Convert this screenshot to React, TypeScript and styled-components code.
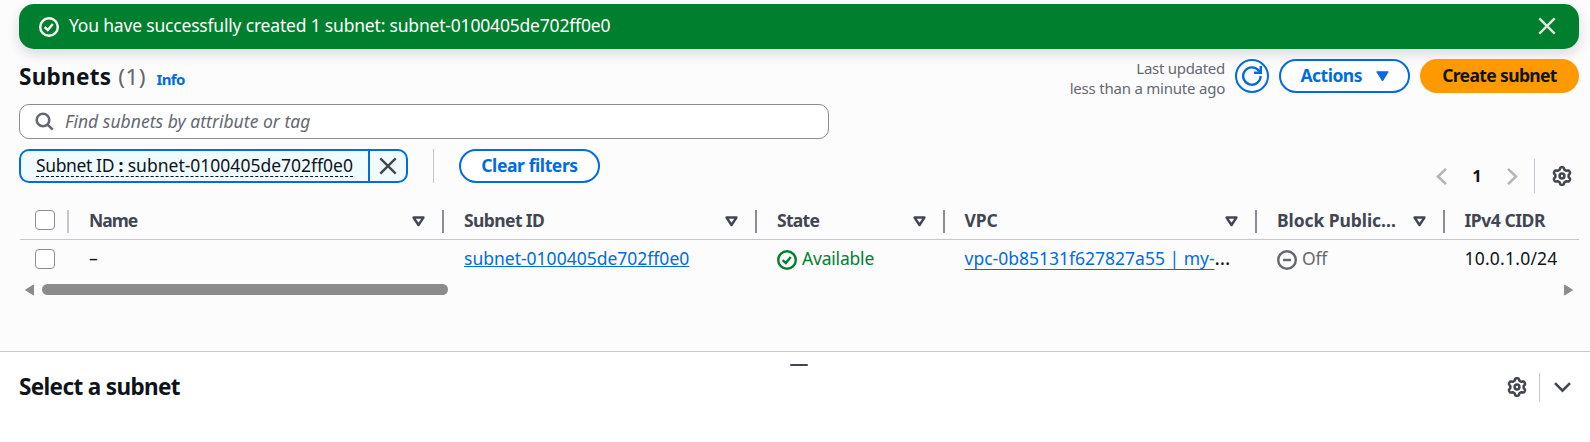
import React from "react";
import styled, { createGlobalStyle } from "styled-components";

const color = {
  text: "#0f141a",
  heading: "#424650",
  muted: "#656871",
  blue: "#006ce0",
  green: "#00802f",
  line: "#c6c6cd",
  control: "#8c8c94",
  disabled: "#b4b4bb",
};

const GlobalStyle = createGlobalStyle`
  * { box-sizing: border-box; }
  body {
    margin: 0;
    background: #fcfcfd;
    color: ${color.text};
    font-family: "Noto Sans", "Open Sans", sans-serif;
    font-size: 17.5px;
    line-height: 24px;
    overflow: hidden;
  }
  svg { display: block; flex: none; }
  button { font: inherit; margin: 0; padding: 0; }
`;

const Page = styled.div`
  display: flex;
  flex-direction: column;
  height: 442px;
`;

const Main = styled.main`
  display: flex;
  flex-direction: column;
  height: 351px;
  padding: 4px 11px 0 19px;
`;

const Text = styled.span<{ $ls?: number }>`
  letter-spacing: ${(p) => p.$ls ?? 0}px;
  white-space: pre;
`;

const Alert = styled.div`
  display: flex;
  align-items: center;
  height: 45px;
  flex: none;
  padding: 0 23px 0 20px;
  border-radius: 15px;
  background: ${color.green};
  color: #fff;
  box-shadow: 0 5px 12px 1px rgba(0, 7, 22, 0.12);
`;

const AlertText = styled.p`
  flex: 1;
  margin: 0;
  padding: 0 0 3px 10px;
`;

const PlainButton = styled.button`
  display: flex;
  border: 0;
  background: none;
`;

const DismissButton = styled(PlainButton)`
  padding-bottom: 2px;
`;

const HeaderRow = styled.header`
  display: flex;
  align-items: flex-start;
  height: 55px;
  padding-top: 10px;
`;

const Title = styled.h1`
  display: flex;
  align-items: baseline;
  flex: 1;
  margin: 0;
  padding-top: 1px;
  font-size: 22.5px;
  font-weight: 700;
  line-height: 34px;
`;

const Count = styled.span`
  margin-left: 7px;
  font-weight: 400;
  letter-spacing: 0.4px;
  color: ${color.muted};
`;

const InfoLink = styled.a`
  margin-left: 10.5px;
  font-size: 15px;
  color: ${color.blue};
  letter-spacing: -0.6px;
`;

const Updated = styled.div`
  display: flex;
  flex-direction: column;
  align-items: flex-end;
  margin: -1px 10px 0 0;
  font-size: 15px;
  line-height: 20px;
  color: ${color.muted};
`;

const Actions = styled.div`
  display: flex;
  gap: 10px;
`;

const Button = styled.button<{ $width: number; $primary?: boolean }>`
  display: flex;
  align-items: center;
  justify-content: center;
  width: ${(p) => p.$width}px;
  height: 34px;
  padding-bottom: 2px;
  border: ${(p) => (p.$primary ? "0" : `2px solid ${color.blue}`)};
  border-radius: 17px;
  background: ${(p) => (p.$primary ? "#ff9900" : "#fff")};
  color: ${(p) => (p.$primary ? color.text : color.blue)};
  font-weight: 700;
  gap: 13.5px;
  svg { margin-top: 2px; }
`;

const IconButton = styled(Button)`
  padding: 0;
  svg { margin: 0; }
`;

const Search = styled.div`
  display: flex;
  align-items: center;
  flex: none;
  width: 810px;
  height: 35px;
  padding: 0 0 1px 15px;
  gap: 11px;
  border: 1px solid ${color.control};
  border-radius: 10px;
  background: #fff;
  color: ${color.muted};
  font-style: italic;
  svg { margin-top: 1px; }
`;

const Filters = styled.div`
  display: flex;
  height: 54px;
  padding-top: 10px;
`;

const Token = styled.div`
  display: flex;
  width: 389px;
  height: 34px;
  border: 2px solid ${color.blue};
  border-radius: 10px;
  background: #f0fbff;
`;

const TokenBody = styled.div`
  flex: 1;
  padding: 2px 0 0 15px;
`;

const TokenLabel = styled.div`
  display: flex;
  width: 317px;
  height: 24px;
  line-height: 24px;
  border-bottom: 1px dashed ${color.text};
`;

const Colon = styled.span`
  width: 15px;
  text-align: center;
  font-weight: 700;
`;

const TokenClose = styled(PlainButton)`
  align-items: center;
  justify-content: center;
  width: 38px;
  padding-right: 1px;
  border-left: 2px solid ${color.blue};
`;

const Divider = styled.i<{ $height: number; $gap: string }>`
  width: 1px;
  height: ${(p) => p.$height}px;
  margin: ${(p) => p.$gap};
  background: ${color.line};
`;

const Pager = styled.nav`
  display: flex;
  align-items: center;
  align-self: flex-end;
  height: 34px;
  margin-left: auto;
  padding-right: 7px;
`;

const PageNumber = styled.span`
  width: 60px;
  padding: 0 0 1px;
  text-align: center;
  font-size: 16.5px;
  font-weight: 700;
`;

const columns = "49px 375px 313px 187.5px 312.5px 187.5px 1fr";

const HeadRow = styled.div`
  display: grid;
  grid-template-columns: ${columns};
  height: 47px;
  margin-left: 1px;
  padding-top: 17px;
  border-bottom: 1px solid ${color.line};
  color: ${color.heading};
  font-weight: 700;
`;

const HeadCell = styled.div<{ $last?: boolean }>`
  display: flex;
  align-items: center;
  justify-content: space-between;
  height: 23px;
  padding: 0 17px 2px 20px;
  border-right: ${(p) => (p.$last ? "0" : `2px solid ${color.control}`)};
  line-height: 23px;
  svg { margin-top: 2px; }
`;

const SelectHead = styled.div`
  height: 23px;
  padding-left: 15px;
  border-right: 2px solid ${color.line};
`;

const Row = styled.div`
  display: grid;
  grid-template-columns: ${columns};
  align-items: start;
  height: 44px;
  margin-left: 1px;
  padding-top: 9px;
`;

const SelectCell = styled.div`
  padding-left: 15px;
`;

const Checkbox = styled.span`
  display: block;
  width: 20px;
  height: 20px;
  border: 1px solid ${color.control};
  border-radius: 4px;
  background: #fff;
`;

const Cell = styled.div`
  padding-left: 20px;
  line-height: 19px;
  white-space: nowrap;
`;

const Link = styled.a<{ $offset: number }>`
  color: ${color.blue};
  text-decoration: underline;
  text-decoration-thickness: 1px;
  text-decoration-skip-ink: none;
  text-underline-offset: ${(p) => p.$offset}px;
`;

const Ellipsis = styled.span`
  font-size: 20px;
  line-height: 1px;
`;

const Status = styled.span<{ $tone: string }>`
  display: flex;
  align-items: flex-start;
  gap: 5px;
  color: ${(p) => p.$tone};
  svg { margin-top: 1px; }
`;

const ScrollTrack = styled.div`
  display: flex;
  align-items: center;
  height: 12px;
  padding: 0 5px 0 5px;
`;

const ScrollThumb = styled.div`
  width: 406px;
  height: 11px;
  margin: 0 auto 1px 7px;
  border-radius: 6px;
  background: #8b8b8b;
`;

const Panel = styled.section`
  flex: 1;
  border-top: 1px solid ${color.line};
  background: #fff;
`;

const Handle = styled.div`
  width: 18px;
  height: 2.5px;
  margin: 11.5px 0 0 790px;
  border-radius: 1px;
  background: ${color.heading};
`;

const PanelBar = styled.div`
  display: flex;
  align-items: center;
  height: 30px;
  margin-top: 6px;
  padding: 0 19.5px 0 19px;
`;

const PanelTitle = styled.h2`
  flex: 1;
  margin: 0;
  padding-bottom: 1px;
  font-size: 22.5px;
  font-weight: 700;
  line-height: 30px;
`;

const CheckCircle = () => (
  <svg width="20" height="20" viewBox="0 0 20 20" fill="none" stroke="currentColor" strokeWidth="2.4">
    <circle cx="10" cy="10" r="8.8" />
    <path d="M5.6 10.2 8.8 13l5-6" />
  </svg>
);

const MinusCircle = () => (
  <svg width="20" height="20" viewBox="0 0 20 20" fill="none" stroke="currentColor" strokeWidth="2.4">
    <circle cx="10" cy="10" r="8.8" />
    <path d="M6 10h8" />
  </svg>
);

const Cross = ({ stroke }: { stroke: string }) => (
  <svg width="18" height="18" viewBox="0 0 18 18" fill="none" stroke={stroke} strokeWidth="2.4">
    <path d="m1.3 1.3 15.4 15.4M16.7 1.3 1.3 16.7" />
  </svg>
);

const SearchIcon = () => (
  <svg width="19" height="19" viewBox="0 0 19 19" fill="none" stroke={color.muted} strokeWidth="2.6">
    <circle cx="8" cy="8" r="6.3" />
    <path d="m12.3 12.3 5.4 5.4" />
  </svg>
);

const Refresh = () => (
  <svg width="20" height="20" viewBox="0 0 20 20" fill="none" stroke="currentColor" strokeWidth="2.4">
    <path d="M18.6 10A8.7 8.7 0 1 1 16.7 4.6L18 6.2" />
    <path d="M18.8 0v6.7H12" />
  </svg>
);

const CaretDown = () => (
  <svg width="13" height="11" viewBox="0 0 13 11" fill="currentColor" stroke="currentColor" strokeLinejoin="round">
    <path d="M.8.8h11.4L6.5 10Z" />
  </svg>
);

const SortIcon = () => (
  <svg width="13" height="11" viewBox="0 0 13 11" fill="none" stroke="currentColor" strokeWidth="2.5" strokeLinejoin="round">
    <path d="M1.6 1.6h9.8L6.5 9Z" />
  </svg>
);

const Chevron = ({ d, w, h, stroke }: { d: string; w: number; h: number; stroke: string }) => (
  <svg width={w} height={h} viewBox={`0 0 ${w} ${h}`} fill="none" stroke={stroke} strokeWidth="2.6">
    <path d={d} />
  </svg>
);

// Six-lobed gear outline sampled from a rounded square wave around the circle.
const gearOutline =
  Array.from({ length: 120 }, (_, i) => {
    const a = (i / 120) * Math.PI * 2;
    // Lobes point straight up and down, so the wave peaks at ±90°.
    const r = 7.7 - 1.1 * Math.tanh(2 * Math.cos(6 * a));
    return `${i ? "L" : "M"}${(10 + r * Math.cos(a)).toFixed(2)} ${(10 + r * Math.sin(a)).toFixed(2)}`;
  }).join("") + "Z";

const Gear = () => (
  <svg width="20" height="20" viewBox="0 0 20 20" fill="none" stroke={color.heading} strokeWidth="2.5" strokeLinejoin="round">
    <path d={gearOutline} />
    <circle cx="10" cy="10" r="2.4" />
  </svg>
);

const ScrollArrow = ({ d }: { d: string }) => (
  <svg width="11" height="12" viewBox="0 0 11 12" fill="#8b8b8b" stroke="#8b8b8b" strokeLinejoin="round">
    <path d={d} />
  </svg>
);

const headings: { label: string; ls: number }[] = [
  { label: "Name", ls: -1 },
  { label: "Subnet ID", ls: -0.6 },
  { label: "State", ls: -0.7 },
  { label: "VPC", ls: -0.1 },
  { label: "Block Public…", ls: -0.08 },
  { label: "IPv4 CIDR", ls: -0.45 },
];

export default function App() {
  return (
    <Page>
      <GlobalStyle />
      <Main>
        <Alert>
          <CheckCircle />
          <AlertText>
            <Text $ls={-0.19}>You have successfully created 1 subnet: subnet-0100405de702ff0e0</Text>
          </AlertText>
          <DismissButton aria-label="Dismiss">
            <Cross stroke="#dfe9e2" />
          </DismissButton>
        </Alert>

        <HeaderRow>
          <Title>
            <Text $ls={0.28}>Subnets</Text>
            <Count>(1)</Count>
            <InfoLink>Info</InfoLink>
          </Title>
          <Updated>
            <Text $ls={-0.28}>Last updated</Text>
            <Text $ls={-0.22}>less than a minute ago</Text>
          </Updated>
          <Actions>
            <IconButton $width={34} aria-label="Refresh">
              <Refresh />
            </IconButton>
            <Button $width={131}>
              <Text $ls={-0.5}>Actions</Text>
              <CaretDown />
            </Button>
            <Button $width={159} $primary>
              <Text $ls={-0.63}>Create subnet</Text>
            </Button>
          </Actions>
        </HeaderRow>

        <Search>
          <SearchIcon />
          <Text $ls={0.03}>Find subnets by attribute or tag</Text>
        </Search>

        <Filters>
          <Token>
            <TokenBody>
              <TokenLabel>
                <Text $ls={-0.38}>Subnet ID</Text>
                <Colon>:</Colon>
                <Text>subnet-0100405de702ff0e0</Text>
              </TokenLabel>
            </TokenBody>
            <TokenClose aria-label="Remove filter">
              <Cross stroke={color.heading} />
            </TokenClose>
          </Token>
          <Divider $height={34} $gap="0 25px" />
          <Button $width={141}>
            <Text $ls={-0.4}>Clear filters</Text>
          </Button>
          <Pager>
            <Chevron d="M10 .9 2 8.5l8 7.6" w={11} h={17} stroke={color.disabled} />
            <PageNumber>1</PageNumber>
            <Chevron d="m1 .9 8 7.6-8 7.6" w={11} h={17} stroke={color.disabled} />
            <Divider $height={34} $gap="0 17px 0 16px" />
            <Gear />
          </Pager>
        </Filters>

        <HeadRow>
          <SelectHead>
            <Checkbox />
          </SelectHead>
          {headings.map((h, i) => (
            <HeadCell key={h.label} $last={i === headings.length - 1}>
              <Text $ls={h.ls}>{h.label}</Text>
              {i < headings.length - 1 && <SortIcon />}
            </HeadCell>
          ))}
        </HeadRow>

        <Row>
          <SelectCell>
            <Checkbox />
          </SelectCell>
          <Cell>–</Cell>
          <Cell>
            <Link $offset={1}>subnet-0100405de702ff0e0</Link>
          </Cell>
          <Cell>
            <Status $tone={color.green}>
              <CheckCircle />
              <Text $ls={-0.2}>Available</Text>
            </Status>
          </Cell>
          <Cell>
            <Link $offset={4}>vpc-0b85131f627827a55 | my-</Link>
            <Ellipsis>…</Ellipsis>
          </Cell>
          <Cell>
            <Status $tone={color.muted}>
              <MinusCircle />
              <Text $ls={-0.2}>Off</Text>
            </Status>
          </Cell>
          <Cell>
            <Text $ls={0.22}>10.0.1.0/24</Text>
          </Cell>
        </Row>

        <ScrollTrack>
          <ScrollArrow d="M9.5 1v10L1.5 6Z" />
          <ScrollThumb />
          <ScrollArrow d="M1.5 1v10l8-5Z" />
        </ScrollTrack>
      </Main>

      <Panel>
        <Handle />
        <PanelBar>
          <PanelTitle>
            <Text $ls={-0.64}>Select a subnet</Text>
          </PanelTitle>
          <Gear />
          <Divider $height={29} $gap="0 14px 0 12px" />
          <Chevron d="m1 1.2 7.5 7.5L16 1.2" w={17} h={11} stroke={color.heading} />
        </PanelBar>
      </Panel>
    </Page>
  );
}
